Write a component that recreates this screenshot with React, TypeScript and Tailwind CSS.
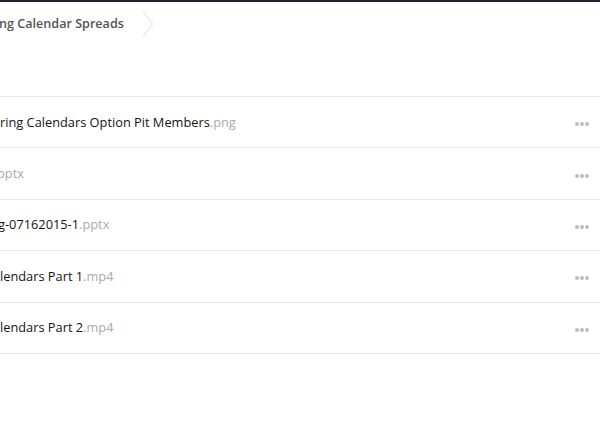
const rows = [
  { name: "ring Calendars Option Pit Members", ext: ".png", shift: "ml-0" },
  { name: "", ext: "pptx", shift: "-ml-[3px]" },
  { name: "g-07162015-1", ext: ".pptx", shift: "-ml-[2px]" },
  { name: "lendars Part 1", ext: ".mp4", shift: "ml-0" },
  { name: "lendars Part 2", ext: ".mp4", shift: "ml-0" },
];

function Dots() {
  return (
    <div className="flex gap-[1px] mt-[4px]">
      <span className="w-[4px] h-[4px] rounded-full bg-[#bdbdbd]" />
      <span className="w-[4px] h-[4px] rounded-full bg-[#bdbdbd]" />
      <span className="w-[4px] h-[4px] rounded-full bg-[#bdbdbd]" />
    </div>
  );
}

export default function App() {
  return (
    <div className="w-[600px] h-[423px] bg-white overflow-hidden font-['Open_Sans',sans-serif]">
      <div className="h-[2px] bg-[#1c2533]" />

      {/* breadcrumb */}
      <div className="h-[44px] flex items-center">
        <span className="-ml-[1px] text-[12.6px] font-semibold text-[#555]">ng Calendar Spreads</span>
        <svg width="12" height="26" viewBox="0 0 12 26" className="ml-[18px]">
          <path d="M1 0.5 L10.5 13 L1 25.5" fill="none" stroke="#dcdcdc" strokeWidth="1" />
        </svg>
      </div>

      <div className="mt-[50px] border-t border-[#e8e8e8]">
        {rows.map((r, i) => (
          <div key={i} className="h-[51.4px] flex items-center justify-between border-b border-[#e8e8e8] pr-[11px]">
            <span className={`${r.shift} text-[12.8px] text-[#141414]`}>
              {r.name}
              <span className="text-[#aaa]">{r.ext}</span>
            </span>
            <Dots />
          </div>
        ))}
      </div>
    </div>
  );
}
